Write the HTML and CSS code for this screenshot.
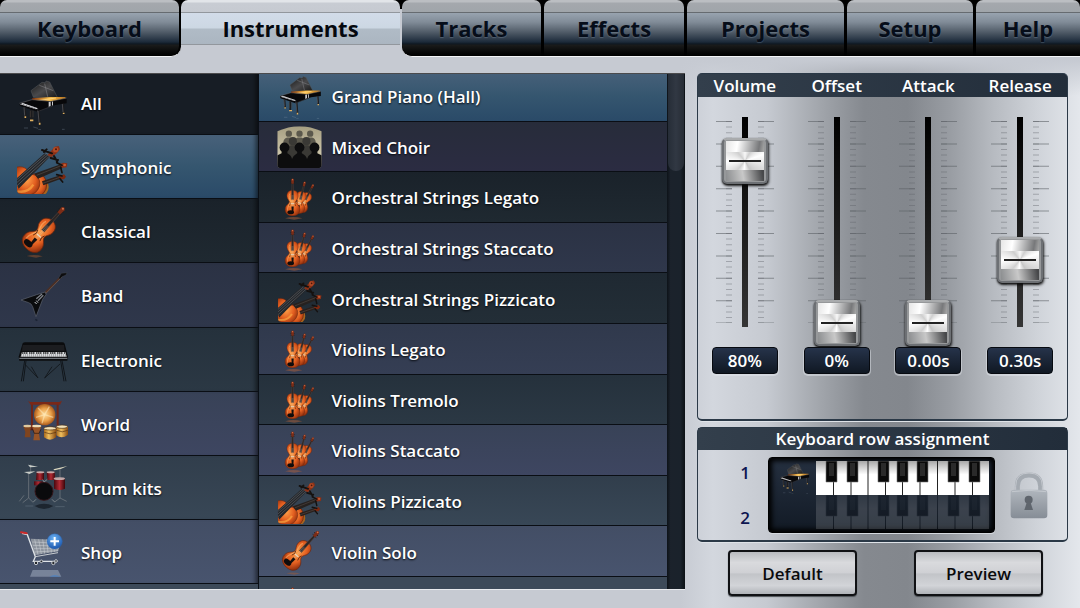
FILE: index.html
```
<!DOCTYPE html>
<html lang="en">
<head>
    <meta charset="UTF-8">
    <meta name="viewport" content="width=device-width, initial-scale=1.0">
    <title>Instruments</title>
    <link rel="stylesheet" href="styles.css">
</head>
<body>
    <!-- Icon definitions -->
    <svg class="defs" width="0" height="0" aria-hidden="true">
        <defs>
            <radialGradient id="wood" cx="45%" cy="45%" r="62%">
                <stop offset="0" stop-color="#ffa24a"/>
                <stop offset=".6" stop-color="#e25e20"/>
                <stop offset="1" stop-color="#96330f"/>
            </radialGradient>
            <linearGradient id="gold" x1="0" x2="1" y1="0" y2="0">
                <stop offset="0" stop-color="#7a2c08"/>
                <stop offset=".5" stop-color="#ffc24a"/>
                <stop offset="1" stop-color="#b5701c"/>
            </linearGradient>
            <linearGradient id="lid" x1="0" x2="1" y1="0" y2="1">
                <stop offset="0" stop-color="#141414"/>
                <stop offset=".5" stop-color="#4a4a4c"/>
                <stop offset="1" stop-color="#151515"/>
            </linearGradient>
            <radialGradient id="gong">
                <stop offset="0" stop-color="#ffe0a0"/>
                <stop offset=".6" stop-color="#e9a04a"/>
                <stop offset="1" stop-color="#a8591c"/>
            </radialGradient>
            <linearGradient id="drum" x1="0" x2="1" y1="0" y2="0">
                <stop offset="0" stop-color="#4a080e"/>
                <stop offset=".5" stop-color="#b02a34"/>
                <stop offset="1" stop-color="#3c060a"/>
            </linearGradient>
            <linearGradient id="bongo" x1="0" x2="1" y1="0" y2="0">
                <stop offset="0" stop-color="#a86a1c"/>
                <stop offset=".4" stop-color="#f0c060"/>
                <stop offset="1" stop-color="#8a4c10"/>
            </linearGradient>
            <linearGradient id="hall" x1="0" x2="0" y1="0" y2="1">
                <stop offset="0" stop-color="#a59d80"/>
                <stop offset=".75" stop-color="#d2cbb0"/>
                <stop offset="1" stop-color="#7a7564"/>
            </linearGradient>
            <radialGradient id="plus" cx="45%" cy="30%" r="75%">
                <stop offset="0" stop-color="#6db4f5"/>
                <stop offset="1" stop-color="#1650a8"/>
            </radialGradient>
            <linearGradient id="steel" x1="0" x2="0" y1="0" y2="1">
                <stop offset="0" stop-color="#b0b6bd"/>
                <stop offset="1" stop-color="#868d96"/>
            </linearGradient>
            <linearGradient id="ivory" x1="0" x2="0" y1="0" y2="1">
                <stop offset="0" stop-color="#a8a8a8"/>
                <stop offset=".4" stop-color="#fff"/>
                <stop offset="1" stop-color="#fff"/>
            </linearGradient>

            <!-- one violin, upright, centred on 0,0 -->
            <g id="fiddle">
                <path d="M0-30C-16-30-27-18-24-2C-23 8-15 12-15 20C-15 32-32 34-32 54C-32 72-17 80 0 80C17 80 32 72 32 54C32 34 15 32 15 20C15 12 23 8 24-2C27-18 16-30 0-30Z" fill="url(#wood)" stroke="#6c240c" stroke-width="2"/>
                <path d="M-12-16C-18-6-13 8-9 18C-13 34-24 40-22 58" fill="none" stroke="#ffc07a" stroke-width="4" opacity=".5"/>
                <path d="M-13 18q6 8 0 20M13 18q-6 8 0 20" fill="none" stroke="#2a0a04" stroke-width="2"/>
                <path d="M-3-72H3L5 10H-5Z" fill="#2c2625" stroke="#5d4a42" stroke-width="1.5"/>
                <path d="M-8 26H8V30H-8Z" fill="#e8d8c0"/>
                <path d="M-2-10V45M2-10V45" stroke="#d0c0b0" stroke-width="1"/>
                <path d="M-5 40H5L3 70H-3Z" fill="#15100f"/>
                <ellipse cx="-8" cy="65" rx="14" ry="9" fill="#100c0c"/>
                <path d="M-9-68H9M-8-60H8" stroke="#241a17" stroke-width="3"/>
                <path d="M-5-58L-6-76Q0-86 6-76L5-58Z" fill="#7c2c16"/>
                <circle cx="0" cy="-76" r="3" fill="#d07048"/>
            </g>

            <symbol id="piano" viewBox="0 0 156 156">
                <path d="M45 38L78 13L88 14L90 9L101 12L126 62L52 58Z" fill="url(#lid)" stroke="#55585c" stroke-width="1.5"/>
                <path d="M86 17L95 56M70 22L112 38" stroke="#8d8d90" stroke-width="1.5"/>
                <path d="M48 61L106 57L148 57L150 64L100 72L50 70Z" fill="url(#gold)"/>
                <path d="M58 69L120 60" stroke="#ffe39a" stroke-width="2"/>
                <path d="M10 76L48 65L104 70L152 60V76L118 81L98 88L64 101L12 84Z" fill="#08080a"/>
                <path d="M12 79L60 94L66 91L20 75Z" fill="#e8e8ec"/>
                <path d="M16 78L60 92" stroke="#222" stroke-width="2" stroke-dasharray="3 2"/>
                <path d="M98 72L104 71V84L98 87ZM108 71L111 70V82L108 84Z" fill="#c9c9cc"/>
                <path d="M10 76L48 65L104 70L152 60" fill="none" stroke="#77777a" stroke-width="1.5"/>
                <path d="M66 92L64 101L112 83" fill="none" stroke="#38383c" stroke-width="2"/>
                <path d="M26 87L28 117M68 98L71 137M46 95V128M141 77L143 105" stroke="#1b1b1d" stroke-width="6"/>
                <path d="M24 88L26 113M66 99L69 133M139 78L141 102" stroke="#77777c" stroke-width="1.5"/>
                <path d="M43 98V118M51 98V118" stroke="#4a4038" stroke-width="2"/>
                <path d="M28 115v5M71 134v6M42 127h10M143 104v4" stroke="#e0b060" stroke-width="5"/>
                <path d="M24 150h12M52 147l14 4M67 155h8M138 154h8" stroke="#8fa0b0" stroke-width="3" opacity=".3"/>
            </symbol>

            <symbol id="strings" viewBox="0 0 156 156">
                <clipPath id="cornerclip"><path d="M3 20H156V156H16Q3 156 3 143Z"/></clipPath>
                <g clip-path="url(#cornerclip)">
                    <ellipse cx="78" cy="135" rx="20" ry="24" fill="#a9641d"/>
                    <ellipse cx="64" cy="128" rx="28" ry="34" fill="url(#wood)" stroke="#662008" stroke-width="2"/>
                    <path d="M0 76Q22 70 34 84Q42 98 58 100Q76 112 70 134Q62 158 32 160H0Z" fill="url(#wood)" stroke="#7a2a10" stroke-width="2"/>
                    <path d="M4 148Q36 154 52 128" fill="none" stroke="#ffb347" stroke-width="7" opacity=".6"/>
                    <path d="M-4 114L86 34L102 44L8 140Z" fill="#25272b"/>
                    <path d="M-2 117L92 34M0 124L97 37M2 132L101 42" stroke="#8b9298" stroke-width="1.2"/>
                    <path d="M54 95L136 66L140 78L66 110Z" fill="#26211f"/>
                    <path d="M78 118L132 100L136 110L82 130Z" fill="#2a201c"/>
                    <path d="M62 100L138 70M80 124L134 105" stroke="#74675e" stroke-width="1.2"/>
                </g>
                <path d="M94 39L108 24L116 14L128 12L132 22L122 34L106 46Z" fill="#8b3016"/>
                <circle cx="119" cy="23" r="8" fill="#b04a26"/>
                <circle cx="120" cy="22" r="3" fill="#4a1408"/>
                <path d="M78 24L108 34M84 30L92 22M104 48L126 54M114 42L124 60" stroke="#15110f" stroke-width="6" stroke-linecap="round"/>
                <path d="M132 66L142 62L154 64L152 76L138 78Z" fill="#8b3016"/>
                <circle cx="146" cy="69" r="4" fill="#c25c34"/>
                <path d="M122 62L138 70M134 76L138 92" stroke="#15110f" stroke-width="5" stroke-linecap="round"/>
                <path d="M128 104L144 97L150 104L144 112L132 112Z" fill="#7b2810"/>
                <path d="M122 98L138 102M132 110L140 120" stroke="#15110f" stroke-width="5" stroke-linecap="round"/>
            </symbol>

            <symbol id="violin" viewBox="0 0 156 156">
                <use href="#fiddle" transform="translate(88 67) rotate(42) scale(1.04)"/>
                <path d="M32 150Q55 144 80 151L60 155Z" fill="#a85a30" opacity=".45"/>
            </symbol>

            <symbol id="violins" viewBox="0 0 156 156">
                <use href="#fiddle" transform="translate(102 80) rotate(27) scale(.66)"/>
                <use href="#fiddle" transform="translate(83 78) rotate(14) scale(.7)"/>
                <use href="#fiddle" transform="translate(54 77) scale(.8)"/>
                <path d="M28 150Q55 142 88 150L60 155Z" fill="#b0603a" opacity=".5"/>
            </symbol>

            <symbol id="choir" viewBox="0 0 156 156">
                <clipPath id="choirclip"><path d="M1 22Q78-14 155 22V136Q155 150 141 150H15Q1 150 1 136Z"/></clipPath>
                <g clip-path="url(#choirclip)">
                    <path d="M0 0H156V156H0Z" fill="url(#hall)"/>
                    <g fill="#5b584c">
                        <circle cx="41" cy="30" r="11"/><circle cx="78" cy="30" r="11"/><circle cx="115" cy="30" r="11"/>
                        <path d="M22 76V58Q24 46 36 43H46Q60 46 60 62Q60 46 72 43H84Q97 46 97 62Q97 46 110 43H121Q133 46 134 58V76Z"/>
                    </g>
                    <g fill="#3a3935">
                        <circle cx="55" cy="56" r="14"/><circle cx="102" cy="56" r="14"/>
                        <path d="M34 120V86Q36 72 50 70H60Q76 74 78 90Q80 74 96 70H107Q122 74 124 88V120Z"/>
                    </g>
                    <g fill="#0d0d0e">
                        <circle cx="26" cy="78" r="17"/><circle cx="78" cy="78" r="17"/><circle cx="130" cy="78" r="17"/>
                        <path d="M0 156V106L16 98V88H36V98Q50 106 52 118Q56 106 70 98V88H86V98Q101 106 104 118Q107 106 120 98V88H140V98L156 106V156Z"/>
                    </g>
                </g>
            </symbol>

            <symbol id="guitar" viewBox="0 0 156 156">
                <path d="M84 72L136 19" stroke="#4b2f25" stroke-width="6"/>
                <path d="M86 74L138 21" stroke="#8b7466" stroke-width="1.5"/>
                <path d="M128 24L136 10L153 8L150 15L138 20L132 28Z" fill="#0c0c0e" stroke="#50545c"/>
                <path d="M15 90L62 74L88 66L90 74L80 88L60 140L50 110Q46 100 38 98Z" fill="#0a0b0d" stroke="#5d6470" stroke-width="2"/>
                <path d="M61 86L78 72M66 92L82 76" stroke="#7d8188" stroke-width="4"/>
                <path d="M61 92L66 98M56 96L62 102" stroke="#c8ccd0" stroke-width="3"/>
                <path d="M58 148L64 152" stroke="#1c2433" stroke-width="5"/>
            </symbol>

            <symbol id="synth" viewBox="0 0 156 156">
                <path d="M26 80L16 142M30 80L22 142M138 80L150 142M134 80L144 142" stroke="#11161b" stroke-width="3"/>
                <path d="M26 90L66 132L46 98M132 90L86 132L108 98" fill="none" stroke="#151a1f" stroke-width="3"/>
                <path d="M20 28Q22 25 28 25H138Q144 25 146 29L156 68L154 80H10L8 68Z" fill="#0b0c0e"/>
                <path d="M20 33H144L146 50H18Z" fill="#1c1d20"/>
                <path d="M18 54H148L152 68H14Z" fill="#d8dadd"/>
                <path d="M19 57H147" stroke="#111" stroke-width="6" stroke-dasharray="3 3 3 3 3 6"/>
                <path d="M17 64H150" stroke="#555" stroke-width="8" stroke-dasharray="1 5"/>
                <path d="M10 73H154" stroke="#85898e" stroke-width="3"/>
            </symbol>

            <symbol id="world" viewBox="0 0 156 156">
                <path d="M48 15V96M125 15V96" stroke="#6d2618" stroke-width="6"/>
                <path d="M36 8L42 12H130L138 8L132 20H44Z" fill="#7a2818"/>
                <path d="M42 94H60M116 94H134" stroke="#5a1e14" stroke-width="5"/>
                <circle cx="86" cy="50" r="32" fill="url(#gong)"/>
                <path d="M86 50L66 30M86 50L100 26M86 50L112 58M86 50L78 76M86 50L60 58" stroke="#fff0c8" stroke-width="4" opacity=".5"/>
                <path d="M22 84H46L42 102L44 118H26L28 102Z" fill="#80441e"/>
                <path d="M48 84H76L69 106L72 127H52L55 106Z" fill="#995426"/>
                <ellipse cx="34" cy="84" rx="12" ry="4" fill="#e0c9a0"/>
                <ellipse cx="62" cy="84" rx="14" ry="4" fill="#eeddb8"/>
                <path d="M50 94L55 106H69L75 94" fill="none" stroke="#2a150b" stroke-width="2"/>
                <path d="M84 92V118Q102 132 120 118V92Z" fill="url(#bongo)"/>
                <path d="M121 86V112Q138 124 156 110V86Z" fill="url(#bongo)"/>
                <ellipse cx="102" cy="91" rx="19" ry="5" fill="#f5e2b8" stroke="#493018" stroke-width="2"/>
                <ellipse cx="138" cy="86" rx="17" ry="5" fill="#f5e2b8" stroke="#493018" stroke-width="2"/>
                <path d="M85 103Q102 112 120 103M122 97Q139 106 155 97" fill="none" stroke="#533112" stroke-width="2"/>
            </symbol>

            <symbol id="drums" viewBox="0 0 156 156">
                <path d="M38 30V108L20 122M38 108L52 122M44 8V30M132 18V108L116 120M132 108L152 118M24 100L10 118" stroke="#7b8288" stroke-width="2" fill="none"/>
                <path d="M36 8L66 14L42 16ZM24 30L58 28L40 36Z" fill="#c9cdc8"/>
                <path d="M112 22L154 12L136 20L116 25Z" fill="#dcd8c0"/>
                <path d="M62 30H84V54H60Z" fill="url(#drum)"/>
                <path d="M92 30H116L118 54H94Z" fill="url(#drum)"/>
                <ellipse cx="73" cy="31" rx="12" ry="3" fill="#c8a8a8"/>
                <ellipse cx="104" cy="31" rx="12" ry="3" fill="#c8a8a8"/>
                <path d="M54 58H80V70H54Z" fill="url(#drum)"/>
                <path d="M114 50H147V80Q130 88 114 80Z" fill="url(#drum)"/>
                <ellipse cx="130" cy="50" rx="17" ry="4" fill="#c0a8a8"/>
                <circle cx="84" cy="88" r="27" fill="#0a0a0c" stroke="#35161a" stroke-width="3"/>
                <path d="M60 112L52 120M108 112L116 120M80 52L84 60L94 52" fill="none" stroke="#a0a4a8" stroke-width="2"/>
                <path d="M56 132Q84 118 112 132Q84 150 56 132Z" fill="#0b1118" opacity=".6"/>
                <path d="M28 132H52M118 134H146" stroke="#8a98a5" stroke-width="3" opacity=".3"/>
            </symbol>

            <symbol id="cart" viewBox="0 0 156 156">
                <path d="M44 38L136 42L126 76L56 88Z" fill="#989ea6" opacity=".85"/>
                <path d="M48 48L132 52M50 58L130 60M54 68L128 68M56 78L127 74M56 40L66 86M68 40L76 84M80 40L86 83M92 40L96 81M104 40L106 80M116 42L116 78M127 42L123 76" stroke="#d0d4d8" stroke-width="1.5"/>
                <path d="M18 22L34 26L58 92L52 106H124" fill="none" stroke="#dfe3e7" stroke-width="4"/>
                <path d="M58 92L126 80" stroke="#c8ccd0" stroke-width="3"/>
                <path d="M15 19L32 22" stroke="#cc2a2a" stroke-width="6" stroke-linecap="round"/>
                <g fill="#23262a" stroke="#c3c7cc" stroke-width="3">
                    <circle cx="60" cy="111" r="5"/><circle cx="112" cy="111" r="5"/>
                    <circle cx="76" cy="106" r="4"/><circle cx="120" cy="105" r="4"/>
                </g>
                <path d="M50 132H126L136 152H42Z" fill="#a8b4c6" opacity=".5"/>
                <path d="M100 152Q116 142 134 152Z" fill="#3f82d0" opacity=".6"/>
                <circle cx="116" cy="46" r="23" fill="url(#plus)" stroke="#2f6cb8"/>
                <path d="M116 33V59M103 46H129" stroke="#fff" stroke-width="6"/>
            </symbol>

            <symbol id="lock" viewBox="0 0 114 144">
                <path d="M22 62V46Q22 12 57 12Q92 12 92 46V62" fill="none" stroke="#a4aab1" stroke-width="15"/>
                <path d="M17 60V46Q17 6 57 6Q97 6 97 46V60" fill="none" stroke="#d3d7dc" stroke-width="2"/>
                <rect x="2" y="56" width="110" height="86" rx="10" fill="url(#steel)"/>
                <path d="M6 62Q57 54 108 62" fill="none" stroke="#c3c8ce" stroke-width="3"/>
                <circle cx="56" cy="86" r="12" fill="#5f656d"/>
                <path d="M51 92H61L69 117H43Z" fill="#5f656d"/>
            </symbol>

            <!-- fader scale: majors every tenth of the travel, three minors between -->
            <symbol id="scale" viewBox="0 0 58 210">
                <g stroke="#5c6066" stroke-opacity=".6">
                    <path d="M8 4V206M50 4V206" stroke-width="16" stroke-dasharray="1 21.4"/>
                    <path d="M13 4V206M45 4V206" stroke-width="6" stroke-dasharray="1 4.6" stroke-opacity=".4"/>
                </g>
            </symbol>

            <symbol id="keys" viewBox="0 0 173 34">
                <path d="M0 0H173V34H0Z" fill="url(#ivory)"/>
                <path d="M17.5 0V34M35 0V34M52 0V34M69.500 0V34M86.500 0V34M104 0V34M121.500 0V34M139 0V34M156.500 0V34" stroke="#222" stroke-width="1"/>
                <g fill="#0a0a0a" stroke="#777" stroke-width=".6">
                    <path d="M10 0H21V21H10ZM31 0H42V21H31ZM62 0H73V21H62ZM81 0H92V21H81ZM101 0H112V21H101ZM132 0H143V21H132ZM153 0H164V21H153Z"/>
                </g>
                <path d="M13 2h5v13h-5zM34 2h5v13h-5zM65 2h5v13h-5zM84 2h5v13h-5zM104 2h5v13h-5zM135 2h5v13h-5zM156 2h5v13h-5z" fill="#2a2a2a"/>
            </symbol>
        </defs>
    </svg>

    <nav class="tabs">
        <div class="tab"><button type="button">Keyboard</button></div>
        <div class="tab active"><button type="button">Instruments</button></div>
        <div class="tab"><button type="button">Tracks</button></div>
        <div class="tab"><button type="button">Effects</button></div>
        <div class="tab"><button type="button">Projects</button></div>
        <div class="tab"><button type="button">Setup</button></div>
        <div class="tab"><button type="button">Help</button></div>
    </nav>

    <main>
        <div class="browser">
            <div class="list categories">
                <button type="button" class="row c1"><svg><use href="#piano"/></svg>All</button>
                <button type="button" class="row selected"><svg><use href="#strings"/></svg>Symphonic</button>
                <button type="button" class="row c3"><svg><use href="#violin"/></svg>Classical</button>
                <button type="button" class="row c4"><svg><use href="#guitar"/></svg>Band</button>
                <button type="button" class="row c5"><svg><use href="#synth"/></svg>Electronic</button>
                <button type="button" class="row c6"><svg><use href="#world"/></svg>World</button>
                <button type="button" class="row c7"><svg><use href="#drums"/></svg>Drum kits</button>
                <button type="button" class="row c8"><svg><use href="#cart"/></svg>Shop</button>
                <div class="rest"></div>
            </div>
            <div class="list sounds">
                <button type="button" class="row selected"><svg><use href="#piano"/></svg>Grand Piano (Hall)</button>
                <button type="button" class="row c2"><svg><use href="#choir"/></svg>Mixed Choir</button>
                <button type="button" class="row c3"><svg><use href="#violins"/></svg>Orchestral Strings Legato</button>
                <button type="button" class="row c4"><svg><use href="#violins"/></svg>Orchestral Strings Staccato</button>
                <button type="button" class="row c9"><svg><use href="#strings"/></svg>Orchestral Strings Pizzicato</button>
                <button type="button" class="row c10"><svg><use href="#violins"/></svg>Violins Legato</button>
                <button type="button" class="row c5"><svg><use href="#violins"/></svg>Violins Tremolo</button>
                <button type="button" class="row c6"><svg><use href="#violins"/></svg>Violins Staccato</button>
                <button type="button" class="row c7"><svg><use href="#strings"/></svg>Violins Pizzicato</button>
                <button type="button" class="row c8"><svg><use href="#violin"/></svg>Violin Solo</button>
                <div class="rest"><svg><use href="#violins"/></svg></div>
            </div>
            <div class="scrollbar"><div class="thumb"></div></div>
        </div>

        <div class="side">
            <section class="panel mixer">
                <div class="fader">
                    <label for="volume">Volume</label>
                    <div class="slot">
                        <svg><use href="#scale"/></svg>
                        <input type="range" id="volume" min="0" max="100" value="80">
                    </div>
                    <output for="volume">80%</output>
                </div>
                <div class="fader">
                    <label for="offset">Offset</label>
                    <div class="slot">
                        <svg><use href="#scale"/></svg>
                        <input type="range" id="offset" min="0" max="100" value="0">
                    </div>
                    <output for="offset">0%</output>
                </div>
                <div class="fader">
                    <label for="attack">Attack</label>
                    <div class="slot">
                        <svg><use href="#scale"/></svg>
                        <input type="range" id="attack" min="0" max="100" value="0">
                    </div>
                    <output for="attack">0.00s</output>
                </div>
                <div class="fader">
                    <label for="release">Release</label>
                    <div class="slot">
                        <svg><use href="#scale"/></svg>
                        <input type="range" id="release" min="0" max="100" value="31">
                    </div>
                    <output for="release">0.30s</output>
                </div>
            </section>

            <section class="panel assignment">
                <h2>Keyboard row assignment</h2>
                <div class="assign">
                    <div class="numbers"><span>1</span><span>2</span></div>
                    <div class="keyboard">
                        <div class="krow"><svg class="kicon"><use href="#piano"/></svg><svg class="keys"><use href="#keys"/></svg></div>
                        <div class="krow off"><span class="kicon"></span><svg class="keys"><use href="#keys"/></svg></div>
                    </div>
                    <button type="button" class="lock" aria-label="Lock"><svg><use href="#lock"/></svg></button>
                </div>
            </section>

            <div class="actions">
                <button type="button">Default</button>
                <button type="button">Preview</button>
            </div>
        </div>
    </main>
</body>
</html>
```
FILE: styles.css
```
* {
    box-sizing: border-box;
}
body {
    margin: 0;
    min-height: 100vh;
    display: flex;
    flex-direction: column;
    font-family: "Open Sans", "Noto Sans", sans-serif;
    font-size: 17px;
    font-weight: 600;
    background:
        linear-gradient(#c6cad2 60px, rgba(198, 202, 210, 0) 96px),
        linear-gradient(to right, #c6cad2 63%, #d3d7de 66%, #c6cad1 71%, #a1a5ab 76%, #85898f 80%, #83878d 84%, #999da3 88%, #b7bbc1 92%, #cfd3d9 96%, #e4e7ec);
}
button {
    font: inherit;
    border: none;
    padding: 0;
    cursor: pointer;
}
.defs {
    position: absolute;
}

/* Tabs */
.tabs {
    display: grid;
    grid-template-columns: 181fr 221fr 142fr 143fr 160fr 129fr 104fr;
    height: 57px;
}
.tab {
    background: #000;
    border-bottom: 1px solid #f4f5f7;
    padding-right: 3px;
}
.tab:first-child {
    border-bottom-right-radius: 10px;
    padding-right: 2px;
}
.tab:last-child {
    padding-right: 0;
}
.tab button {
    width: 100%;
    height: 56px;
    border-radius: 7px 7px 0 0;
    font-size: 22px;
    font-weight: 700;
    line-height: 56px;
    color: #060d19;
    text-shadow: 0 1px 1px rgba(170, 190, 210, 0.25);
    background: linear-gradient(#bbbec2 2px, #a4a8ad 3px, #a0a5aa 12px, #666b70 12px, #666b70 13px, #98a3af 13px, #818c98 22px, #56616d 31px, #1c2a3a 42px, #0e1721 44px, #1a1b1b 45px, #050505 53px, #000);
}
.tab:first-child button {
    border-radius: 7px 7px 10px 0;
}
.tab.active {
    background: linear-gradient(#000 9px, transparent 9px);
    border-bottom: none;
    padding: 0 2px 0 0;
}
.tab.active + .tab {
    border-bottom-left-radius: 10px;
}
.tab.active + .tab button {
    border-bottom-left-radius: 10px;
}
.tab.active button {
    color: #05080e;
    text-shadow: none;
    background: linear-gradient(#e2e5e9 2px, #c8ccd3 3px, #c6cad1 12px, #92979d 12px, #92979d 13px, #d2dce9 13px, #ccd7e3 28px, #b0bbc6 29px, #abb6c1 44px, #92979d 44px, #92979d 45px, #c6cad2 45px);
}

main {
    flex: 1;
    display: grid;
    grid-template-columns: 686fr 370fr;
    gap: 12px;
    padding: 16px 12px 12px 0;
}

/* Instrument browser */
.browser {
    display: grid;
    grid-template-columns: 258fr 410fr 18fr;
    margin-bottom: 6px;
    overflow: hidden;
    background: #141b23;
    border-top: 1px solid #4b4b4d;
    border-bottom: 1px solid #e8eaed;
}
.list {
    display: flex;
    flex-direction: column;
    margin-top: -3px;
    color: #fff;
}
.sounds {
    border-left: 1px solid #0a0f16;
}
.row {
    flex: 1;
    min-height: 46px;
    display: flex;
    align-items: center;
    padding-top: 2px;
    color: #fff;
    text-align: left;
    border-bottom: 1px solid #0a0e14;
    text-shadow: 0 1px 2px #05080c;
    overflow: hidden;
}
.categories .row {
    gap: 13px;
    padding-left: 16px;
    box-shadow: inset -6px 0 5px -4px rgba(0, 0, 0, 0.6);
}
.categories svg {
    width: 52px;
    height: 52px;
}
.sounds .row {
    gap: 10px;
    padding-left: 18px;
}
.sounds svg {
    width: 45px;
    height: 45px;
}
.selected { background: linear-gradient(#48617a, #35566f 50%, #2a4a68); }
.c1 { background: #171d25; }
.c2 { background: linear-gradient(#272c3a, #2b2c42); }
.c3 { background: linear-gradient(#1a222a, #1f2931); }
.c4 { background: linear-gradient(#2b3244, #2f374b); }
.c5 { background: linear-gradient(#25313c, #2b3844); }
.c6 { background: linear-gradient(#384257, #3e4661); }
.c7 { background: linear-gradient(#313e4c, #384756); }
.c8 { background: linear-gradient(#434e65, #48546e); }
.c9 { background: linear-gradient(#1f2932, #232e37); }
.c10 { background: linear-gradient(#30394c, #353e54); }
.rest {
    height: 5px;
    overflow: hidden;
    background: #3d4a59;
}
.sounds .rest {
    height: 12px;
    padding: 7px 0 0 18px;
}
.scrollbar {
    background: linear-gradient(to right, #0d1218, #1b222b 20%, #1a222b 75%, #0c1116);
}
.thumb {
    height: 97px;
    margin: 0 1px;
    border-radius: 0 0 8px 8px;
    background: linear-gradient(to right, #262d37, #313843 50%, #262c35);
}

/* Right column */
.side {
    display: flex;
    flex-direction: column;
    gap: 6px;
}
.panel {
    border: 1px solid #2b3947;
    border-bottom-width: 2px;
    border-radius: 5px;
    box-shadow: 0 1px 0 #dfe3e8;
}
.mixer {
    flex: 1;
    display: grid;
    grid-template-columns: repeat(4, 1fr);
    align-items: start;
    padding: 0 1px;
    background: linear-gradient(to right, #333f4c, #222d3a) 0 0 / 100% 23px no-repeat;
}
.fader {
    display: grid;
    justify-items: center;
}
.fader label {
    height: 23px;
    line-height: 23px;
    color: #fff;
}
.slot {
    display: grid;
    place-items: center;
    margin-top: 1px;
    margin-bottom: 1px;
}
.slot svg, .slot input {
    grid-area: 1 / 1;
}
.slot svg {
    width: 58px;
    height: 210px;
}
input[type="range"] {
    appearance: none;
    writing-mode: vertical-lr;
    direction: rtl;
    width: 58px;
    height: 248px;
    margin: 0;
    background: linear-gradient(#000, #353535) center / 6px 210px no-repeat;
    cursor: pointer;
}
input[type="range"]::-webkit-slider-thumb {
    appearance: none;
    width: 46px;
    height: 46px;
    border: 2px solid #6d7074;
    border-top-color: #a9abad;
    border-radius: 5px;
    background:
        linear-gradient(#222, #222) center / 32px 2px no-repeat,
        conic-gradient(#f8f8f8, #cfcfcf 30deg, #fff 70deg, #dedede 110deg, #c6c6c6 150deg, #fff 185deg, #d0d0d0 220deg, #fff 270deg, #cfcfcf 320deg, #f8f8f8) center / 38px 18px no-repeat,
        linear-gradient(100deg, #e6e6e6, #fff 30%, #77787a 85%, #aaa) 2px 1px / 38px 12px no-repeat,
        linear-gradient(80deg, #8b8d8f, #c8c8c8 45%, #47484a 95%) 2px 30px / 38px 11px no-repeat,
        #96989a;
    box-shadow: 0 1px 2px #111, 1px 2px 3px rgba(0, 0, 0, 0.7);
}
output {
    width: 66px;
    height: 27px;
    line-height: 25px;
    text-align: center;
    color: #fff;
    border: 1px solid #070a10;
    border-radius: 4px;
    background: linear-gradient(#26334a, #101823);
    box-shadow: 0 1px 0 1px rgba(225, 230, 236, 0.5);
}
h2 {
    margin: 0;
    height: 22px;
    line-height: 22px;
    font-size: 17px;
    font-weight: 600;
    text-align: center;
    color: #fff;
    background: linear-gradient(to right, #333f4c, #222d3a);
}
.assign {
    display: flex;
    align-items: center;
    padding: 7px 19px 7px 39px;
}
.numbers {
    width: 16px;
    display: grid;
    gap: 22px;
    line-height: 23px;
    text-align: center;
    color: #0d1550;
}
.keyboard {
    margin: 0 15px;
    padding: 3px 5px;
    border: 1px solid #000;
    border-radius: 4px;
    background: linear-gradient(#253040, #121a25);
    box-shadow: inset 0 0 5px 3px #000, 0 1px 0 #d5d9de;
}
.krow {
    display: flex;
    align-items: center;
    height: 34px;
}
.kicon {
    width: 32px;
    height: 32px;
    margin: 0 6px 0 4px;
}
.keys {
    width: 173px;
    height: 34px;
}
.off .keys {
    opacity: 0.15;
}
.lock {
    margin-left: auto;
    background: none;
}
.lock svg {
    display: block;
    width: 38px;
    height: 48px;
}
.actions {
    display: flex;
    justify-content: space-between;
    margin-top: 2px;
    padding: 0 25px 0 31px;
}
.actions button {
    width: 129px;
    height: 46px;
    color: #0a0a0c;
    border: 2px solid #101114;
    border-radius: 4px;
    background: linear-gradient(#b9bbbf, #d9dadd 25%, #cfd0d4 50%, #c2c4c8 52%, #d2d4d8 80%, #b0b3b8);
    box-shadow: 0 1px 1px #4d5156;
}
```
